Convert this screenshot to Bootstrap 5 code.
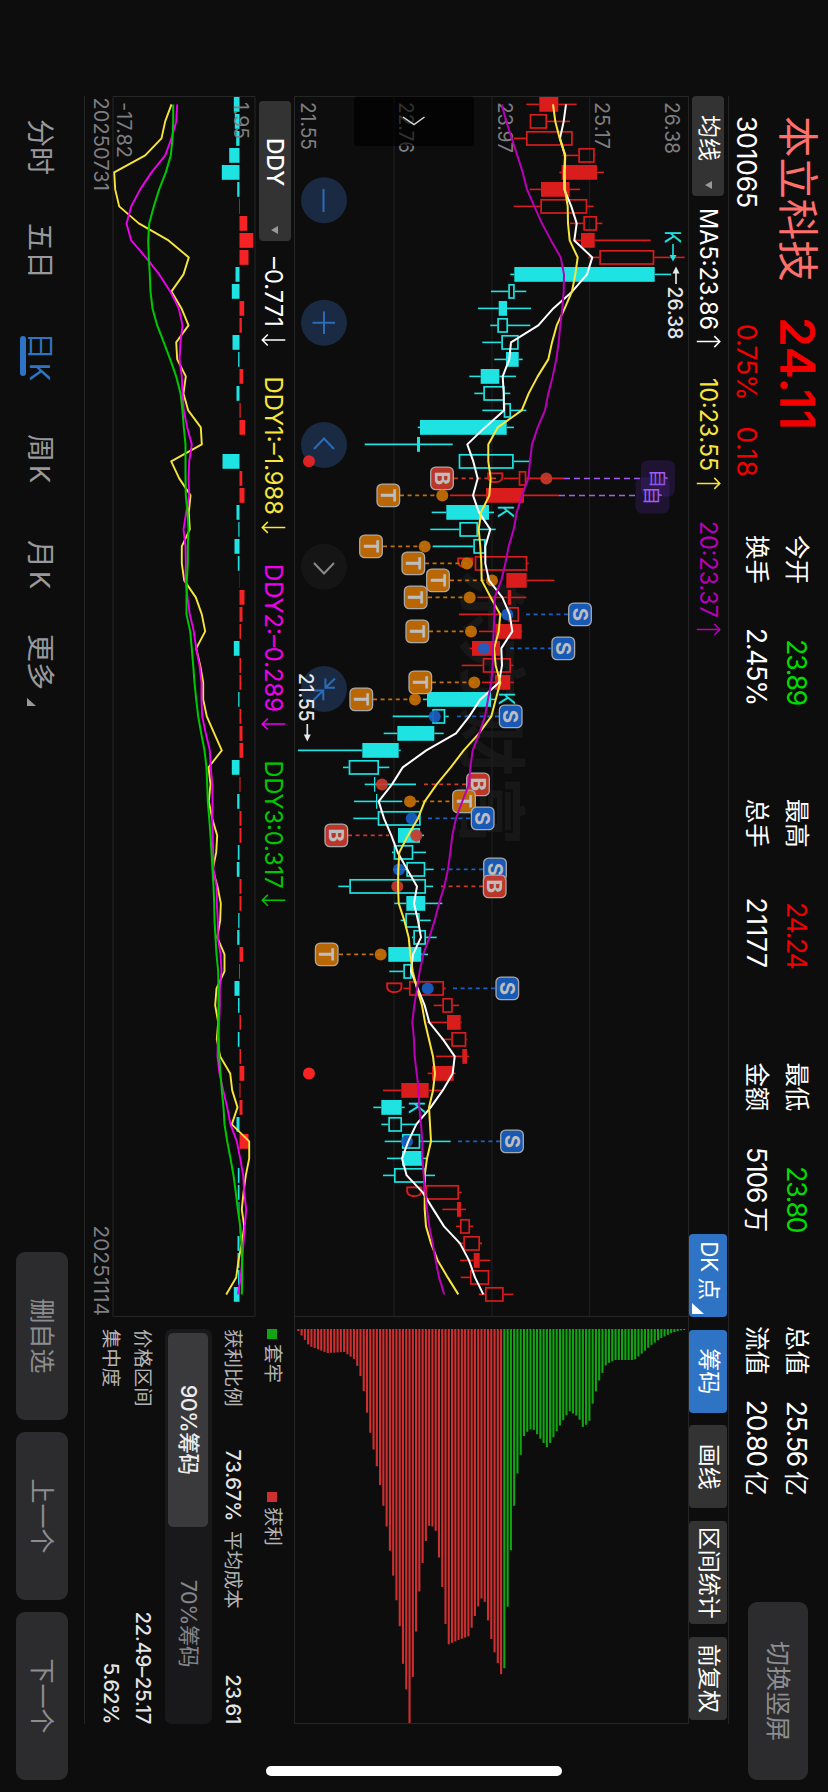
<!DOCTYPE html>
<html lang="zh-CN">
  <head>
    <meta charset="UTF-8" />
    <meta name="viewport" content="width=device-width, initial-scale=1.0" />
    <title>本立科技 301065</title>
    <!-- Bootstrap CSS -->
    <link
      href="https://cdn.jsdelivr.net/npm/bootstrap@5.3.0/dist/css/bootstrap.min.css"
      rel="stylesheet"
    />
    <style>
      :root {
        --line: #242424;
      }
      html { overflow: hidden; }
      body {
        width: 828px;
        height: 1792px;
        overflow: hidden;
        background: #0d0d0d;
        color: #fff;
        font-family: Inter, "Noto Sans CJK SC", sans-serif;
        line-height: 1;
      }
      .screen { width: 828px; height: 1792px; overflow: hidden; }
      /* landscape screen turned a quarter clockwise */
      .stage {
        width: 1792px;
        height: 828px;
        position: relative;
        transform-origin: 0 0;
        transform: translateX(828px) rotate(90deg);
        white-space: nowrap;
      }
      .stage svg { display: block; overflow: visible; }
      .quote-head { height: 99px; padding-left: 116px; }
      .quote-main {
        display: grid;
        grid-template-columns: 201px 218px;
        grid-template-rows: 62px 38px;
        align-items: center;
      }
      .stock-name { font-size: 41.4px; color: #ff706d; }
      .stock-price { font-size: 48px; font-weight: 600; color: #f20000; letter-spacing: 0.5px; }
      .stock-num { font-size: 26.5px; letter-spacing: -1.2px; }
      .stock-code { letter-spacing: -0.2px; }
      .pct { padding-left: 7px; width: 109.5px; letter-spacing: -0.9px; }
      .num-wide { letter-spacing: 0.6px; }
      .unit { margin-left: 5px; letter-spacing: 0; font-size: 25px; }
      .c-red { color: #f00000; }
      .c-green { color: #00dc00; }
      .stats-grid {
        display: grid;
        grid-template-columns: repeat(4, 170px);
        grid-template-rows: 40px 40px;
        column-gap: 93.7px;
        padding-top: 11px;
        font-size: 24.5px;
      }
      .btn-dim {
        background: #2c2c2e;
        color: #8c8c91;
        border: 0;
        border-radius: 9px;
        padding: 0;
        font-size: 25px;
        line-height: 1;
      }
      .btn-rotate { width: 178px; height: 60px; margin: 20px 0 0 106px; }
      .tool-row {
        height: 41px;
        width: 1628px;
        margin-left: 96px;
        border-top: 1px solid var(--line);
        border-bottom: 1px solid var(--line);
      }
      .picker {
        background: #333;
        border-radius: 4px;
        height: 32px;
        font-size: 23px;
      }
      .picker-ma { width: 100px; padding: 0 7px 0 19px; }
      .picker-ddy { width: 140px; padding: 0 7px 0 37px; margin-left: 5px; font-weight: 500; }
      .tool-set { gap: 12.6px; margin-right: 4px; }
      .tool-btn {
        height: 38px;
        border-radius: 4px;
        background: #333;
        font-size: 23px;
      }
      .tool-btn.on { background: #2f74c4; }
      .tool-dk { padding-left: 7px; font-size: 22.5px; letter-spacing: -0.4px; }
      .tool-dk svg { margin: 0 0 3px 3px; }
      .w-83 { width: 83px; }
      .w-104 { width: 103.5px; }
      .main-chart { margin-left: 96px; height: 394px; }
      .lower { height: 210px; margin-left: 96px; width: 1628px; border-bottom: 1px solid var(--line); }
      .sub-col { width: 1221px; }
      .sub-head { height: 38.5px; }
      .chip-col { width: 395px; color: #b4b4b4; font-size: 19.4px; }
      .chip-col b { font-weight: 500; color: #e4e4e4; font-size: 20.5px; letter-spacing: -0.45px; }
      .chip-line { height: 32px; }
      .chip-legend { width: 163px; }
      .swatch { width: 10px; height: 10px; margin-right: 5px; }
      .cost-line { padding-top: 7px; height: 36px; }
      .cost-name { width: 80px; }
      .cost-pct { width: 112px; }
      .cost-label { margin-left: 10px; }
      .seg { height: 47.4px; background: #19191b; border-radius: 7px; padding: 3.7px; font-size: 21.5px; margin: 6px 0; }
      .seg > div { border-radius: 5px; width: 50%; letter-spacing: -0.4px; }
      .seg-on { background: #3a3a3c; color: #ececec; font-weight: 500; }
      .seg-off { color: #85858a; }
      .tabs-row { height: 84px; padding-left: 119px; color: #98989d; font-size: 28px; }
      .tabs-row .tab { height: 64px; padding-top: 20px; margin-top: 10px; position: relative; width: 108px; }
      .tabs-row .tab:nth-child(1) { width: 104px; }
      .tabs-row .tab:nth-child(2) { width: 109px; }
      .tabs-row .tab:nth-child(3) { width: 102px; }
      .tabs-row .tab:nth-child(4) { width: 106px; }
      .tabs-row .tab:nth-child(5) { width: 94px; }
      .tab span { margin-left: 3px; font-size: 27px; }
      .tab.on { color: #2f74c4; }
      .tab.on::after {
        content: "";
        position: absolute;
        left: 4px;
        bottom: 10px;
        width: 40px;
        height: 6px;
        border-radius: 3px;
        background: #2f74c4;
      }
      .foot-btns { gap: 12px; padding: 16px 12px 0 0; }
      .btn-foot { width: 168px; height: 52px; }
      .home-bar {
        position: absolute;
        left: 1766px;
        top: 266px;
        width: 10px;
        height: 296px;
        border-radius: 5px;
        background: #fff;
      }
    </style>
  </head>
  <body>
    <div class="screen">
    <div class="stage d-flex flex-column">
      <!-- Quote header -->
      <div class="quote-head d-flex align-items-start">
        <div class="quote-main">
          <div class="stock-name">本立科技</div>
          <div class="stock-price">24.11</div>
          <div class="stock-num stock-code">301065</div>
          <div class="stock-num c-red d-flex"><span class="pct">0.75%</span><span class="num-wide">0.18</span></div>
        </div>
        <div class="stats-grid">
          <div class="d-flex justify-content-between align-items-center">今开<span class="stock-num c-green">23.89</span></div>
          <div class="d-flex justify-content-between align-items-center">最高<span class="stock-num c-red">24.24</span></div>
          <div class="d-flex justify-content-between align-items-center">最低<span class="stock-num c-green">23.80</span></div>
          <div class="d-flex justify-content-between align-items-center">总值<span class="stock-num">25.56<span class="unit">亿</span></span></div>
          <div class="d-flex justify-content-between align-items-center">换手<span class="stock-num">2.45%</span></div>
          <div class="d-flex justify-content-between align-items-center">总手<span class="stock-num num-wide">21177</span></div>
          <div class="d-flex justify-content-between align-items-center">金额<span class="stock-num">5106<span class="unit">万</span></span></div>
          <div class="d-flex justify-content-between align-items-center">流值<span class="stock-num">20.80<span class="unit">亿</span></span></div>
        </div>
        <button class="btn btn-dim btn-rotate">切换竖屏</button>
      </div>

      <!-- Moving averages and tools -->
      <div class="tool-row d-flex align-items-center">
        <div class="picker picker-ma d-flex align-items-center justify-content-between">
          均线<svg width="8" height="7"><path d="M0 0h8L4 7z" fill="#98989d" /></svg>
        </div>
        <svg class="flex-grow-1" height="38" id="ma-legend"></svg>
        <div class="tool-set d-flex">
          <div class="tool-btn tool-dk on w-83 d-flex align-items-center">
            DK 点<svg class="align-self-end" width="11" height="12"><path d="M11 0v12H0z" fill="#fff" /></svg>
          </div>
          <div class="tool-btn on w-83 d-flex align-items-center justify-content-center">筹码</div>
          <div class="tool-btn w-83 d-flex align-items-center justify-content-center">画线</div>
          <div class="tool-btn w-104 d-flex align-items-center justify-content-center">区间统计</div>
          <div class="tool-btn w-83 d-flex align-items-center justify-content-center">前复权</div>
        </div>
      </div>

      <!-- Candles and chip distribution -->
      <svg class="main-chart" id="main" width="1628" height="394" viewBox="96 140 1628 394"></svg>

      <div class="lower d-flex justify-content-between">
        <div class="sub-col">
          <div class="sub-head d-flex align-items-center">
            <div class="picker picker-ddy d-flex align-items-center justify-content-between">
              DDY<svg width="8" height="7"><path d="M0 0h8L4 7z" fill="#98989d" /></svg>
            </div>
            <svg class="flex-grow-1" height="38" id="ddy-legend"></svg>
          </div>
          <svg id="sub" width="1221" height="171" viewBox="96 572.5 1221 171"></svg>
        </div>
        <div class="chip-col">
          <div class="d-flex pt-1 chip-line mt-1">
            <div class="chip-legend d-flex align-items-center"><span class="swatch" style="background: #12a512"></span>套牢</div>
            <div class="chip-legend d-flex align-items-center"><span class="swatch" style="background: #d02f2f"></span>获利</div>
          </div>
          <div class="cost-line d-flex align-items-center mt-1">
            <span class="cost-name">获利比例</span><b class="cost-pct text-end">73.67%</b><span class="cost-label">平均成本</span><b class="ms-auto">23.61</b>
          </div>
          <div class="seg d-flex">
            <div class="seg-on d-flex align-items-center justify-content-center">90%筹码</div>
            <div class="seg-off d-flex align-items-center justify-content-center">70%筹码</div>
          </div>
          <div class="chip-line d-flex align-items-center justify-content-between"><span>价格区间</span><b>22.49–25.17</b></div>
          <div class="chip-line d-flex align-items-center justify-content-between"><span>集中度</span><b>5.62%</b></div>
        </div>
      </div>

      <!-- Periods -->
      <div class="tabs-row d-flex">
        <div class="tab">分时</div>
        <div class="tab">五日</div>
        <div class="tab on">日<span>K</span></div>
        <div class="tab">周<span>K</span></div>
        <div class="tab">月<span>K</span></div>
        <div class="tab d-flex">更多<svg class="ms-2" width="8" height="32"><path d="M8 18v9H0z" fill="#98989d" /></svg></div>
        <div class="foot-btns d-flex ms-auto">
          <button class="btn btn-dim btn-foot">删自选</button>
          <button class="btn btn-dim btn-foot">上一个</button>
          <button class="btn btn-dim btn-foot">下一个</button>
        </div>
      </div>
      <div class="home-bar"></div>
    </div>
    </div>

    <!-- Bootstrap JS Bundle with Popper -->
    <script src="https://cdn.jsdelivr.net/npm/bootstrap@5.3.0/dist/js/bootstrap.bundle.min.js"></script>
    <script>
      const RED = "#d91c1c";
      const CYAN = "#1fe2e2";
      const STEP = 17;
      const px = (i) => 104.4 + STEP * i; // time -> x
      const py = (v) => 828 - v; // value -> y

      const rect = (x, y, w, h, attrs) => `<rect x="${x}" y="${y}" width="${w}" height="${h}" ${attrs}/>`;
      const seg = (x1, y1, x2, y2, attrs) => `<line x1="${x1}" y1="${y1}" x2="${x2}" y2="${y2}" ${attrs}/>`;
      const label = (x, y, s, size, fill, len, extra = "") =>
        `<text x="${x}" y="${y}" font-size="${size}" fill="${fill}" textLength="${len}" lengthAdjust="spacingAndGlyphs" ${extra}>${s}</text>`;
      const curve = (vals, color, w = 2) =>
        `<polyline fill="none" stroke="${color}" stroke-width="${w}" stroke-linejoin="round" points="${vals
          .map((v, i) => px(i) + "," + py(v))
          .join(" ")}"/>`;

      // [kind, body low, body high, wick low, wick high]; R/C filled, r/c hollow
      const candles = [
        ["R",539.3,558.3,526.3,576.7],["r",529.7,547,529.7,570],["r",526,572.7,514,572.7],["r",578.3,594.7,562.7,595.3],
        ["R",561.7,597,559.3,604],["R",541,569.7,529.7,580],["r",540.3,587.3,513.7,593.7],["r",583.3,597,570,602.3],
        ["R",581,594.7,574.7,650.7],["r",599.3,654.3,588.3,684.7],["C",514.3,654.7,510.3,671],["c",508.3,514.7,491,526.3],
        ["C",498.7,507,478,531],["c",497.3,508,490.3,530.3],["c",501.3,518.7,482.3,518.7],["C",506,518.7,494.3,522.7],
        ["C",480.7,499.3,469.3,516],["c",483.3,504.7,474.3,510.3],["c",503.7,511,482.3,526.3],["C",420,506.7,417.7,514],
        ["C",417,420,364.7,452.7],["c",458.7,513.7,458.7,529.3],["r",518.7,526.3,504,564],["R",486,524,450,559],
        ["C",446.3,489,431.7,494],["c",459.3,478,430.3,495.7],["c",473.3,485.7,432.7,485.7],["r",474.7,527.3,474.7,528.7],
        ["R",506.3,526.7,506.3,554.3],["R",507.7,511,477.3,526.3],["r",508.3,519,459,519],["R",495.3,521.7,479,522.3],
        ["R",472,500,469.7,500],["r",482.7,511,461.7,513.3],["R",495,510.3,482,514],["C",427,491,423,495.7],
        ["c",432.3,445.3,392.7,448.7],["C",397.3,434.3,383.7,443.7],["C",362.3,398.7,298,400.7],["c",348.7,379,343,389.3],
        ["C",374,375.3,364.7,416],["C",376,377.3,354,402.3],["c",377.7,420.7,353.3,420.7],["C",398,420,398,424],
        ["c",393.7,413.3,392,426],["c",406.3,425.3,393.3,433.7],["c",349.3,426,338.3,433],["C",406.3,425.3,394.3,442.3],
        ["c",405.3,419.7,400.7,430.7],["c",413.3,426,412,436.7],["C",388.3,421.3,388.3,428],["c",403.3,411.7,389.3,411.7],
        ["r",409,444,403.3,445.7],["r",442.3,452.7,433.7,459],["R",447,460.7,426.7,461.7],["r",451.3,466.3,441,467.3],
        ["R",462.3,467,436,469.3],["R",432,453.7,427.7,455.7],["R",401.3,428.7,383,442.7],["C",381.3,401.7,373.3,404.7],
        ["c",388.3,402,381.3,417.3],["c",402,420.3,384.7,450.7],["C",402,422,387,426],["c",394,425.7,383,435],
        ["r",425.7,459,425.7,461.7],["R",457,461,442.3,466],["r",460,470,456,473.3],["r",463.3,480,458,482],
        ["R",473.7,479.7,460,490.3],["r",470,489.3,460.7,489.3],["r",485,503.7,478.7,513.3]
      ];
      const ma5 = [566,563.7,560,565,564.3,564.3,571.3,576.7,574.3,592.3,587,572.3,553.3,538.3,511,509.3,502.7,503.7,504,485,467.3,473.3,477.7,473,479,490.3,485.3,485.3,489,502.3,509.7,512.3,501.3,502,499,480.3,469.3,456,426.3,402.7,392,378.7,384,391.3,397.7,407.3,417,414,418,421,413,411,417.7,424.7,429.3,443,454.7,452.7,442.7,430.7,416.3,408.3,402,406.7,422.7,433.3,444,460,469,475,483.3];
      const ma10 = [553,555.3,559.7,565.3,564.7,565,567.7,568,569.7,577.7,575.3,572,564.7,556.7,552,548.3,537.7,528.7,521.7,497.7,488.3,488.3,490.7,489.3,481,478.7,480.3,481.3,481.7,490.7,500.3,498.7,494,495.7,500.3,495.7,491.3,479,463.7,450.7,436.7,424.7,418,408,399.3,398.3,398,398.7,404.3,408.7,410.3,412.7,417,422,425,429,433,435,433,429,430,431,427,424.7,424.7,424.7,426,431,437.7,447.7,458.3];
      const ma20 = [501.7,506.3,511.7,517.3,522.7,527,534.3,542,551,560.7,564,563.7,562.3,560.3,558.7,556.3,552.7,548.3,545,537.7,532,530,528.3,522,516.7,513.7,508.7,505.3,501.3,494.7,494.3,493.7,493,492.7,491.3,488,485,479.3,472.7,470.3,469,462.3,456,452.3,450.3,448,444.3,439,434.7,429.3,423.3,419.7,417,414.3,412.3,414,414.7,416.7,418.7,419.3,421,422.3,422.3,423.7,425.3,427,429.3,432.7,435.7,439,444.3];

      // [letter, index, badge, dot, dash start, dash end]
      const marks = [
        ["B",22,442,546.3,454,498],["T",23,388.3,442.3,400,437],["T",26,371,424.7,383,424],["T",27,413.3,467,425,467],
        ["T",28,438,492,450,492],["T",29,415.7,469.7,428,469],["S",30,580,507.3,526,568],["T",31,417.3,471,429,471],
        ["S",32,563.3,484,510,551],["T",34,420.3,474.3,432,474],["T",35,361.3,415,373,415],["S",36,510.7,434.7,457,499],
        ["B",40,478,382,424,466],["T",41,464,410,415,452],["S",42,482.7,411.7,428,471],["B",43,336.3,416.3,348,389],
        ["S",45,495,399,441,483],["B",46,494.7,397.3,441,483],["T",50,326.7,380.7,339,381],["S",52,507.3,427.7,453,495],
        ["S",61,512,407,458,500]
      ];
      const markColor = { B: "#c93a2b", T: "#c66f04", S: "#1a60c4" };

      // chip outline: [price position, depth edge]
      const chips = [[297,1331],[308,1346],[326,1353],[343,1352],[354,1360],[361,1382],[368,1428],[377,1474],[386,1531],[392,1577],[398,1622],[402,1668],[405,1690],[407.5,1723],[409,1723],[411.5,1676],[417,1600],[423,1548],[428,1525],[434,1528],[440,1577],[446,1645],[457,1640],[468,1636],[475,1611],[482,1594],[491,1645],[500,1675],[504,1666],[507,1588],[512,1514],[516,1474],[523,1434],[531,1428],[546,1448],[560,1423],[568,1411],[577,1417],[582,1428],[588,1421],[592,1400],[598,1380],[605,1364],[614,1360],[633,1360],[640,1354],[650,1345],[660,1338],[670,1333],[684,1329]];
      const chipEdge = (p) => {
        const k = Math.max(1, chips.findIndex((c) => c[0] >= p));
        const [a, b] = [chips[k - 1], chips[k]];
        return a[1] + ((b[1] - a[1]) * (p - a[0])) / (b[0] - a[0]);
      };

      function drawMain() {
        let s = "";
        const grid = 'stroke="#1e1e1e" stroke-width="1.2"';
        s += `<text x="568" y="362" font-size="69.5" font-weight="700" fill="#171717">东方财富</text>`;
        [394, 492, 589.5].forEach((v) => (s += seg(96, py(v), 1316.5, py(v), grid)));
        s += `<path d="M96.500 140V533.5H1723.500V140M1316.500 140V533.500" fill="none" stroke="#262626"/>`;
        const axis = [["26.38",162.7,52],["25.17",232.7,47],["23.97",330.3,51],["22.76",428.8,51],["21.55",526.7,48]];
        axis.forEach(([t, y, w]) => (s += label(102, y, t, 20, "#7f7f83", w)));

        candles.forEach(([k, lo, hi, wl, wh], i) => {
          const c = k.toUpperCase() === "R" ? RED : CYAN;
          const w = `stroke="${c}" stroke-width="1.6"`;
          if (wl < lo) s += seg(px(i), py(wl), px(i), py(lo), w);
          if (wh > hi) s += seg(px(i), py(hi), px(i), py(wh), w);
          if (k === "R" || k === "C") s += rect(px(i) - 7.4, py(hi), 14.8, hi - lo, `fill="${c}"`);
          else s += rect(px(i) - 6.6, py(hi) + 0.8, 13.2, hi - lo - 1.6, `fill="none" stroke="${c}" stroke-width="1.7"`);
        });

        // D / K signals
        const sig = (x, y, t) => label(x, y, t, 21.5, t === "D" ? RED : CYAN, 13);
        s += sig(471, 341.5, "D") + sig(556, 370.7, "D") + sig(981, 442.500, "D") + sig(1185, 422.3, "D");
        s += sig(505, 329.7, "K") + sig(692, 329.3, "K") + sig(1101, 418.7, "K") + sig(230.500, 163, "K");
        s += `<path d="M244 155H256" stroke="${CYAN}" stroke-width="1.6"/><path d="M255 151.500l6.500 3.500-6.500 3.500z" fill="${CYAN}"/>`;

        // watch-list marks
        s += seg(478.5, py(564), 478.5, py(641), 'stroke="#a45cf5" stroke-width="1.5" stroke-dasharray="6 4"');
        s += seg(495.5, py(559), 495.5, py(636), 'stroke="#a45cf5" stroke-width="1.5" stroke-dasharray="6 4"');
        [[478.4, 658], [495.4, 652.5]].forEach(([x, v]) => {
          s += rect(x - 18.2, py(v) - 17, 36.4, 34, 'rx="7" fill="#5b2fb0" fill-opacity=".22"');
          s += `<text x="${x}" y="${py(v) + 7.2}" font-size="19" fill="#a45cf5" text-anchor="middle">自</text>`;
        });

        marks.forEach(([t, i, b, d, a, z]) => {
          const c = markColor[t];
          s += seg(px(i), py(a), px(i), py(z), `stroke="${c}" stroke-width="1.6" stroke-dasharray="4 3.6"`);
          s += `<circle cx="${px(i)}" cy="${py(d)}" r="6" fill="${c}" fill-opacity=".92"/>`;
          s += rect(px(i) - 11.3, py(b) - 11.3, 22.6, 22.6, `rx="5" fill="${c}" fill-opacity=".93" stroke="#a9a9a9" stroke-width="1.3"`);
          s += `<text x="${px(i)}" y="${py(b) + 7.5}" font-size="20.5" font-weight="700" fill="#bdbdbd" text-anchor="middle">${t}</text>`;
        });

        s += curve(ma5, "#fff") + curve(ma10, "#f7e53b") + curve(ma20, "#b800b8");

        // high / low captions
        s += `<path d="M284 152H270" stroke="#e6e6e6" stroke-width="1.7"/><path d="M273.500 148.500l-7 3.500 7 3.500z" fill="#e6e6e6"/>`;
        s += label(286.5, 160.3, "26.38", 20, "#e6e6e6", 53, 'font-weight="500"');

        // floating controls
        s += rect(96.5, 354, 49.5, 120, 'rx="3" fill="#000" fill-opacity=".62"');
        s += `<path d="M117 425l7.500-11-7.500-10.500" fill="none" stroke="#d8d8d8" stroke-width="1.5"/>`;
        const bubble = (x, fill, stroke, d) =>
          `<circle cx="${x}" cy="504" r="23" fill="${fill}"/><path d="${d}" fill="none" stroke="${stroke}" stroke-width="2"/>`;
        s += bubble(200.3, "#192a42", "#2b6cb8", "M189 504.500h23");
        s += bubble(322.7, "#192a42", "#2b6cb8", "M311.500 504h22.500M322.700 493v22.500");
        s += bubble(445, "#192a42", "#2b6cb8", "M449 514l-10.500-10 10.500-10");
        s += bubble(566.7, "#151515", "#8a8a8a", "M563 514l10.500-10-10.500-10");
        s += bubble(689, "#192a42", "#2b6cb8", "M678.500 493l9 9.300M678.500 502.600h9.300v-9.600M700 514.500l-9.500-9.700M690.500 514.500v-9.800h9.800");
        s += `<circle cx="461.300" cy="519" r="6" fill="#f02525" fill-opacity=".9"/><circle cx="1073.400" cy="519" r="6" fill="#fa2323"/>`;
        s += label(673, 528.7, "21.55", 20, "#e6e6e6", 48.5, 'font-weight="500"');
        s += `<path d="M724 520.700H737" stroke="#e6e6e6" stroke-width="1.7"/><path d="M734.500 517.200l7 3.500-7 3.500z" fill="#e6e6e6"/>`;

        // chip distribution
        for (let p = 297; p < 686; p += 3.27) {
          const c = p < 502.500 ? "#cf2f2f" : "#12a512";
          s += rect(1329, py(p) - 2.4, Math.max(1, chipEdge(Math.min(p, 683)) - 1329), 2.1, `fill="${c}"`);
        }
        document.getElementById("main").innerHTML = s;
      }

      const ddy = [234.3,235.3,236.7,229.7,222.3,237.7,239.6,247.7,253.7,249,236,232.3,244.7,242.3,233,238.6,243.7,237,241.2,245.7,240,223,242.8,245,237,238.8,235,238.3,240.3,245,243,241.5,234.3,241.5,241.8,238.7,241.8,243,243.7,232.3,241,237.7,242,242,238.3,237.3,242,242,238.7,237.7,243.7,239.5,235,238.5,241.5,238.3,241.5,244.8,241,243,237,249,240,238.3,238.3,239,241,238,238,238.5,234.3];
      const ddy1 = [172,165.7,162,145.7,114.7,115.7,119.7,139.3,169,189.3,184,172,182,189,176.7,177.7,186.3,184,188.7,201.3,202.3,171.7,179.7,191,189.3,190.3,182.3,182.3,184.7,196.3,202.3,205.7,196.7,200.7,203.7,203.7,207.3,214.7,222.3,209,211,209.3,212.7,217.7,216.7,213.3,218,221.3,220.7,217.7,225,225,217,215.7,218.7,217.3,220.7,230.7,232.7,238,232.3,249.7,249.7,246.3,244,242.3,244.7,242.3,239,236.7,226.7];
      const ddy2 = [177.7,176.7,172,165.7,152,140.7,131.7,127,131.7,146.3,159.7,170.7,179.3,183,181,180,182.3,183,184.3,187.7,192.3,189.7,189,189.7,186.7,184,186,186.3,186,188,190.3,194.3,196.7,200,202,202,202.7,206.3,210.3,211.3,212.7,213,212.7,213,213.7,214,217,217.3,218.3,218.3,221,222,220.3,220.3,219.7,218.3,218,220,223.7,227.7,231,237.3,240.7,243.7,244.7,246.7,245.3,244,242.7,241.3,238.3];
      const ddy3 = [173.7,173.7,173,171.3,166.3,159.7,154.3,149.7,148.7,149.3,150.3,151,153,157.7,164.3,170.7,176.7,181,183,184.3,186,186,186,186.3,188,189,188.3,188.3,187.3,187,187,190.7,192.3,193.7,195,196.7,198.7,201.7,205,207,207.7,208.3,209.7,211,212,213,214,214.7,215,216,217,218.7,219,219,218.7,219.3,219.7,221,222.3,224,225,227.7,231,234,236.3,238.3,240.7,242,242.7,242.7,242.3];

      function drawSub() {
        let s = `<path d="M96.500 572.500H1316.500V714.500H96.500z" fill="none" stroke="#262626"/>`;
        ddy.forEach((v, i) => {
          const d = v - 240;
          if (!d) return;
          s += rect(px(i) - 7.4, d > 0 ? py(v) : 588, 14.8, Math.abs(d), `fill="${d > 0 ? "#f52323" : CYAN}"`);
        });
        s += label(102, 593.500, "1.95", 19.5, "#7f7f83", 37);
        s += label(102, 710.6, "-17.82", 19.5, "#7f7f83", 56);
        s += label(97.500, 734, "20250731", 19.700, "#7f7f83", 93.500);
        s += label(1225.500, 734, "20251114", 19.700, "#7f7f83", 90.500);
        s += curve(ddy1, "#f7e53b", 1.9) + curve(ddy2, "#f000f0", 1.9) + curve(ddy3, "#00c800");
        document.getElementById("sub").innerHTML = s;
      }

      // [text, x, width, arrow x, color, direction]
      function drawLegend(id, left, base, items) {
        document.getElementById(id).innerHTML = items
          .map(([t, x, w, ax, c, down]) => {
            const y = base - 8.800;
            const dir = down ? 1 : -1;
            return (
              label(x - left, base, t, 24.3, c, w) +
              `<path d="M${ax - left} ${y - 11.500}v23M${ax - left - 5.500} ${y + dir * 6}l5.500 ${dir * 5.500} 5.500 ${-dir * 5.500}" fill="none" stroke="${c}" stroke-width="1.5"/>`
            );
          })
          .join("");
      }

      document.addEventListener("DOMContentLoaded", () => {
        drawMain();
        drawSub();
        drawLegend("ma-legend", 196, 27.5, [
          ["MA5:23.86", 208, 122, 341.6, "#fff", false],
          ["10:23.55", 378, 93, 483.4, "#f7e53b", false],
          ["20:23.37", 521, 97, 629.5, "#b800b8", false]
        ]);
        drawLegend("ddy-legend", 241, 29, [
          ["–0.771", 257, 70, 340, "#fff", true],
          ["DDY1:–1.988", 376.5, 138.5, 527.4, "#f7e53b", true],
          ["DDY2:–0.289", 564, 148, 724, "#f000f0", true],
          ["DDY3:0.317", 760.5, 128, 900.3, "#00c800", true]
        ]);
      });
    </script>
  </body>
</html>
